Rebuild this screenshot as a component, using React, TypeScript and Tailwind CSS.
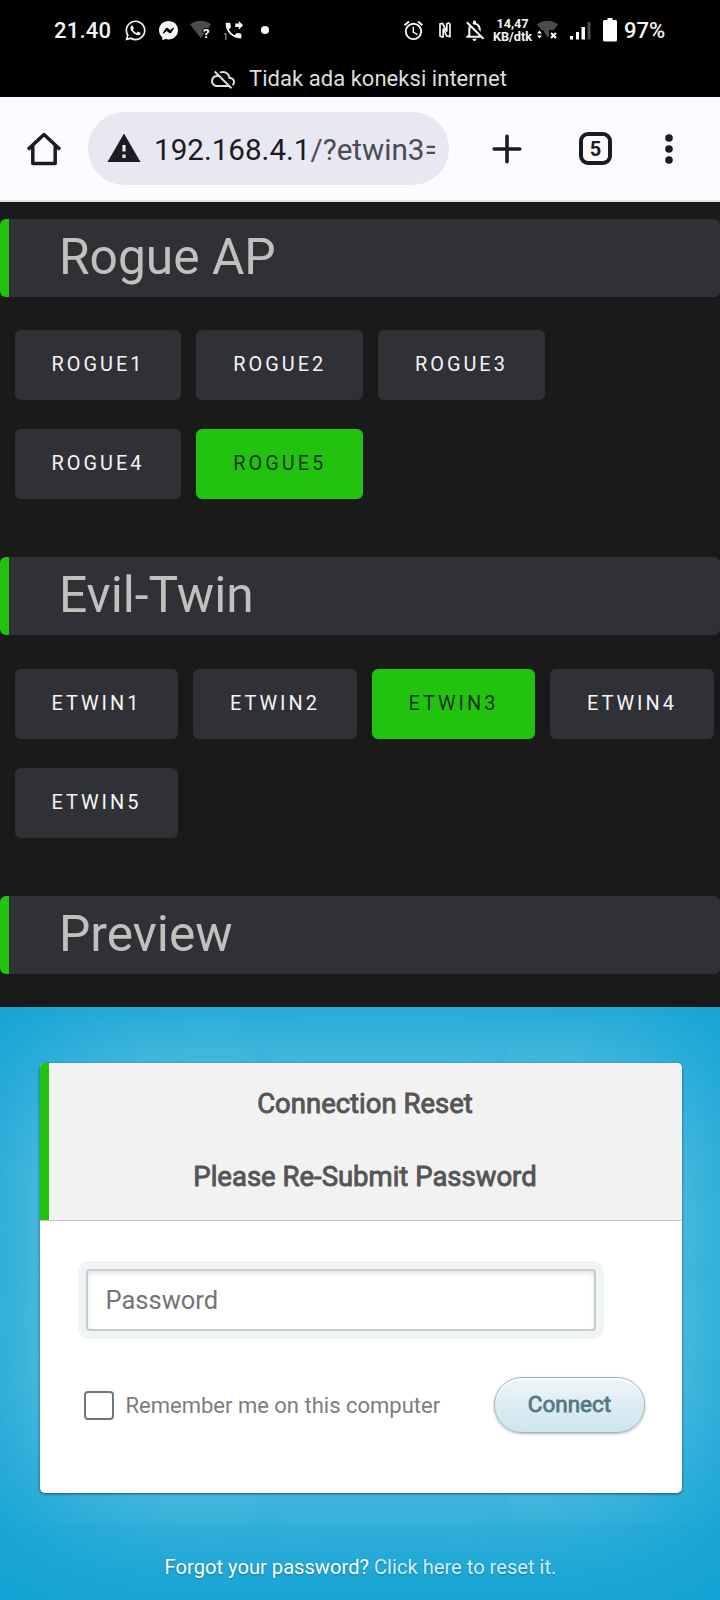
import type { ReactNode } from "react";
import { FaWhatsapp } from "react-icons/fa";
import { BsMessenger } from "react-icons/bs";
import { MdPhoneForwarded, MdOutlineCloudOff, MdOutlineAlarm, MdOutlineNotificationsOff } from "react-icons/md";

function StatusBar() {
  return (
    <header className="flex h-[97px] flex-col bg-black text-[#f4f4f4]">
      <div className="flex h-[60px] items-center pl-[54px] pr-[54px]">
        <span className="w-[58px] whitespace-nowrap text-[22px] font-medium tracking-[0.2px]">21.40</span>
        <FaWhatsapp className="ml-[12px] h-[23px] w-[23px]" />
        <BsMessenger className="ml-[12px] h-[19px] w-[19px]" />
        <svg className="ml-[12px] h-[20px] w-[22px]" viewBox="0 0 22 20">
          <path d="M0 4.5C6-.5 15-.5 21 4.5L10.700 18Z" fill="#4c4c4c" />
          <text x="13" y="18" fontSize="13" fontWeight="700" fill="#fff" stroke="#000" strokeWidth="2" paintOrder="stroke">?</text>
        </svg>
        <span className="relative ml-[11px] block h-[21px] w-[21px]">
          <MdPhoneForwarded className="h-[21px] w-[21px]" />
          <span className="absolute bottom-0 left-0 text-[9px] leading-[7px] text-[#bbb]">1</span>
        </span>
        <span className="ml-[17px] h-[8px] w-[8px] rounded-full bg-white" />

        <div className="ml-auto flex items-center">
          <MdOutlineAlarm className="h-[23px] w-[23px]" />
          <svg className="ml-[14px] h-[18px] w-[12px]" viewBox="0 0 12 18" fill="none" stroke="#f4f4f4" strokeWidth="1.700">
            <path d="M4.200 16.500L1 15V3L3.600 2.500L7.800 10.500V2M4.200 16.500V7.500L7.800 15L11 15.500V3L8.500 1.500" />
          </svg>
          <MdOutlineNotificationsOff className="ml-[11px] h-[25px] w-[25px]" />
          <div className="ml-[5px] flex w-[41px] flex-col items-center text-[12.700px] font-bold leading-[13px]">
            <span>14,47</span>
            <span>KB/dtk</span>
          </div>
          <svg className="ml-[4px] h-[20px] w-[22px]" viewBox="0 0 22 20">
            <path d="M0 4.500C6-.5 15-.5 21 4.500L10.700 18Z" fill="#4c4c4c" />
            <path d="M0 10H6L10.700 18H0ZM12 10H22V20H12Z" fill="#000" />
            <path d="M0 13.500L2.500 10.500L5 13.500ZM0 15.500L2.500 18.500L5 15.500Z" fill="#fff" />
            <path d="M14 13L19 18M19 13L14 18" stroke="#fff" strokeWidth="2" />
          </svg>
          <svg className="ml-[11px] h-[19px] w-[21px]" viewBox="0 0 21 19" fill="#fff">
            <path d="M0 15H3V18.500H0ZM6 11H9V18.500H6ZM11.500 6H15V18.500H11.500Z" />
            <path d="M17.500 1H20.500V18.500H17.500Z" fill="#4c4c4c" />
          </svg>
          <svg className="ml-[12px] h-[24px] w-[14px]" viewBox="0 0 14 24" fill="#fff">
            <path d="M4.500 0H9.500V2H12.500Q14 2 14 3.500V22Q14 23.500 12.500 23.500H1.500Q0 23.500 0 22V3.500Q0 2 1.500 2H4.500Z" />
          </svg>
          <span className="ml-[7px] w-[42px] whitespace-nowrap text-[22px] font-medium">97%</span>
        </div>
      </div>
      <div className="flex h-[37px] items-center justify-start pl-[211px] text-[#dedede]">
        <MdOutlineCloudOff className="h-[24px] w-[24px]" />
        <span className="ml-[14px] pt-px text-[22px] leading-[36px] tracking-[0.040px]">Tidak ada koneksi internet</span>
      </div>
    </header>
  );
}

function BrowserBar() {
  return (
    <nav className="flex h-[105px] items-center border-b-2 border-[#e2e0e5] bg-[#fdfbff] text-[#1b1b21]">
      <svg className="ml-[27px] h-[34px] w-[34px]" viewBox="0 0 34 34" fill="none" stroke="#1b1b21" strokeWidth="3.500" strokeLinejoin="round">
        <path d="M1 17.500L17 2.500L33 17.500M5.800 14V31.500H28.200V14" />
      </svg>
      <div className="ml-[27px] flex h-[73px] w-[361px] items-center rounded-full bg-[#e7e8f1]">
        <svg className="ml-[19px] h-[30px] w-[34px]" viewBox="0 0 34 30">
          <path d="M17 -0.500L33.500 28H0.500Z" fill="#1b1b21" />
          <path d="M15.400 11H18.600V17.500H15.400ZM15.400 20.500H18.600V24H15.400Z" fill="#e7e8f1" />
        </svg>
        <span className="ml-[13px] w-[281px] overflow-hidden whitespace-nowrap pt-[2px] text-[29.600px] leading-[40px]">
          192.168.4.1<span className="text-[#4b4b55]">/?etwin3=</span>
        </span>
      </div>
      <svg className="ml-[43px] h-[30px] w-[30px]" viewBox="0 0 30 30" stroke="#1b1b21" strokeWidth="3.600" strokeLinecap="round">
        <path d="M15 2.200V27.800M2.200 15H27.800" />
      </svg>
      <span className="ml-[57px] flex h-[33px] w-[33px] items-center justify-center rounded-[9px] border-4 border-[#1b1b21] pt-px text-[20px] font-bold leading-none">5</span>
      <svg className="ml-[53px] h-[30px] w-[8px] overflow-visible" viewBox="0 0 8 30" fill="#1b1b21">
        <circle cx="4" cy="4" r="3.800" />
        <circle cx="4" cy="15" r="3.800" />
        <circle cx="4" cy="26" r="3.800" />
      </svg>
    </nav>
  );
}

function Heading({ children }: { children: ReactNode }) {
  return (
    <h1 className="h-[78px] rounded-[6px] border-l-[9px] border-[#22c30f] bg-[#303136] pl-[50px] text-[49.700px] leading-[77px] text-[#bfc1bd]">
      {children}
    </h1>
  );
}

function Choices({ names, active, width }: { names: string[]; active: string; width: string }) {
  return (
    <div className="flex flex-wrap gap-x-[15px] gap-y-[29.200px] pb-[58.200px] pl-[14.700px] pt-[33.400px]">
      {names.map((name) => (
        <button
          key={name}
          className={`h-[70px] ${width} rounded-[6px] text-[19.900px] leading-[68px] tracking-[3px] ${
            name === active ? "bg-[#22c30f] text-[#15330f]" : "bg-[#303136] text-[#f5f5f5]"
          }`}
        >
          {name}
        </button>
      ))}
    </div>
  );
}

function LoginPreview() {
  return (
    <section className="flex h-[593px] flex-col items-center overflow-hidden bg-[#10a2d3] pl-px pt-[56px]">
      <form className="flex h-[430px] w-[642px] shrink-0 flex-col overflow-hidden rounded-[5px] bg-white shadow-[0_1px_3px_rgba(0,0,0,0.5),0_0_160px_#7fceea]">
        <div className="h-[158px] border-b border-b-[#c8c8c8] bg-[#f2f2f2]">
          <div className="flex h-[157px] flex-col items-center border-l-[9px] border-[#22c30f] pt-[4px] text-[27.500px] leading-[73px] text-[#555] [-webkit-text-stroke:0.900px_#555]">
            <span>Connection Reset</span>
            <span>Please Re-Submit Password</span>
          </div>
        </div>
        <input
          placeholder="Password"
          className="ml-[46px] mt-[48px] h-[62px] w-[510px] rounded-[4px] border-2 border-[#c8cccd] bg-white pl-[18px] text-[25.500px] leading-[56px] shadow-[0_0_0_8px_#eff4f7,inset_0_2px_4px_rgba(0,0,0,0.12)] placeholder:text-[#757575]"
        />
        <div className="mt-[46.500px] flex h-[56px] items-center">
          <span className="ml-[44px] h-[29px] w-[30px] rounded-[4px] border-2 border-[#767676]" />
          <span className="ml-[12px] whitespace-nowrap text-[22px] text-[#7d7d7d]">Remember me on this computer</span>
          <button className="ml-auto mr-[37px] h-[56px] w-[151px] rounded-full border border-[#a3b5bd] bg-gradient-to-b from-[#edf5f8] to-[#cde5ef] pb-px pl-[1px] text-[22.500px] text-[#527881] shadow-[0_1px_3px_rgba(0,0,0,0.3),inset_0_2px_0_#fff] [-webkit-text-stroke:0.800px_#527881]">
            Connect
          </button>
        </div>
      </form>
      <p className="relative mt-[62px] text-[20.150px] leading-[24px] text-[#cfeffb] [text-shadow:0_1px_2px_rgba(0,0,0,0.3)]">
        <span className="text-white">Forgot your password?</span> Click here to reset it.
      </p>
    </section>
  );
}

export default function App() {
  return (
    <div className="h-[1600px] w-[720px] overflow-hidden bg-[#1a1a1a] font-[Roboto,sans-serif]">
      <StatusBar />
      <BrowserBar />
      <main className="flex flex-col pt-[16.500px]">
        <Heading>Rogue AP</Heading>
        <Choices names={["ROGUE1", "ROGUE2", "ROGUE3", "ROGUE4", "ROGUE5"]} active="ROGUE5" width="w-[166.700px]" />
        <Heading>Evil-Twin</Heading>
        <Choices names={["ETWIN1", "ETWIN2", "ETWIN3", "ETWIN4", "ETWIN5"]} active="ETWIN3" width="w-[163.500px]" />
        <Heading>Preview</Heading>
        <div className="h-[32.900px]" />
        <LoginPreview />
      </main>
    </div>
  );
}
